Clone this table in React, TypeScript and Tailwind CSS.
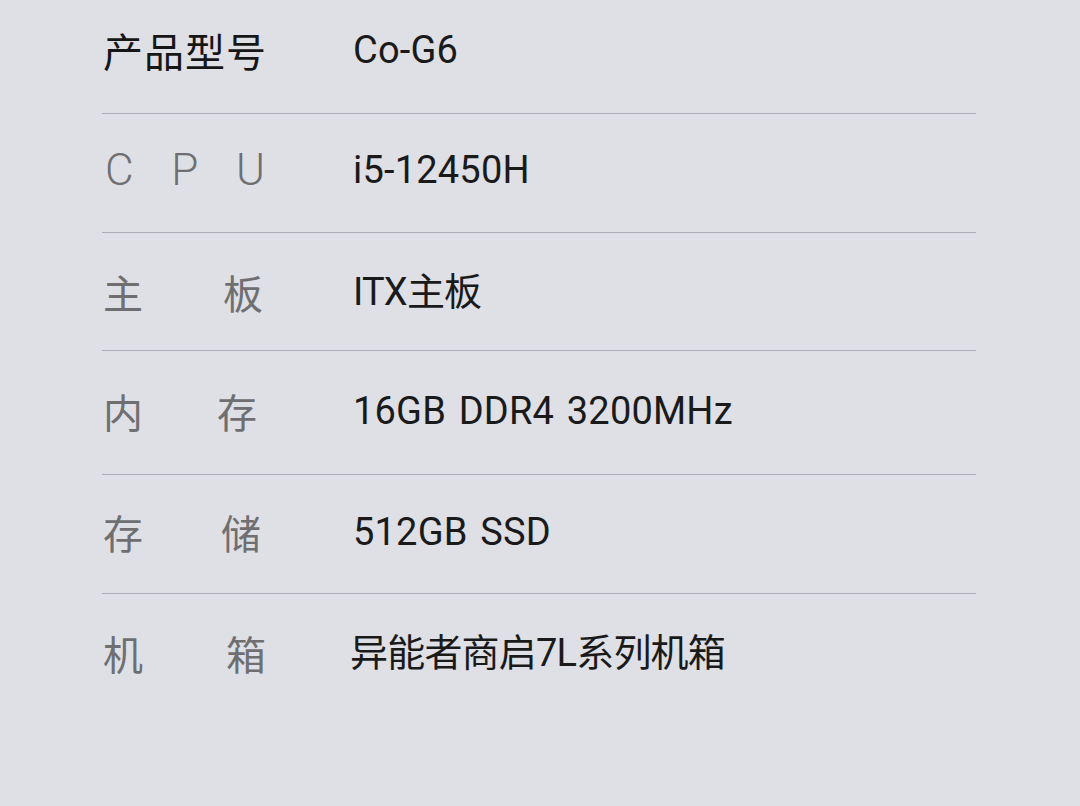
import { type ReactNode } from 'react';

type SpecRow = {
  label: string[];
  value: ReactNode;
  // row height + bottom padding tuned to the divider positions
  box: string;
  labelBox: string;
  valueFix?: string;
  strong?: boolean;
};

const rows: SpecRow[] = [
  { label: ['产', '品', '型', '号'], value: 'Co-G6', box: 'h-[114px] pb-[14px] border-b', labelBox: 'w-[163px]', strong: true },
  { label: ['C', 'P', 'U'], value: 'i5-12450H', box: 'h-[119px] pb-[6px] border-b', labelBox: 'w-[162px]' },
  { label: ['主', '板'], value: 'ITX主板', box: 'h-[118px] border-b', labelBox: 'w-[160px]', valueFix: 'tracking-[-0.8px]' },
  { label: ['内', '存'], value: '16GB DDR4 3200MHz', box: 'h-[124px] pb-[3px] border-b', labelBox: 'w-[154px]' },
  { label: ['存', '储'], value: '512GB SSD', box: 'h-[119px] pb-[4px] border-b', labelBox: 'w-[158px]' },
  { label: ['机', '箱'], value: '异能者商启7L系列机箱', box: 'h-[118px]', labelBox: 'w-[163px]', valueFix: 'tracking-[-0.8px] -ml-[3px]' },
];

function Label({ row }: { row: SpecRow }) {
  const latin = /^[A-Z]$/.test(row.label[0]);
  return (
    <div
      className={`flex justify-between ${row.labelBox} ${
        latin
          ? "pl-[2px] font-['Roboto',sans-serif] text-[44px] font-light"
          : "font-['Noto_Sans_CJK_SC',sans-serif] text-[40px]"
      } leading-none ${row.strong ? 'text-[#161616]' : 'text-[#6f6f72]'}`}
    >
      {row.label.map((ch, i) => (
        <span key={i}>{ch}</span>
      ))}
    </div>
  );
}

export default function App() {
  return (
    <div className="h-[806px] w-[1080px] overflow-hidden bg-[#dee0e5]">
      <div className="ml-[102px] w-[874px]">
        {rows.map((row, i) => (
          <div key={i} className={`flex items-center border-[#abaeb4] ${row.box}`}>
            <div className="w-[251px] shrink-0 pl-[1px]">
              <Label row={row} />
            </div>
            <div
              className={`font-['Roboto','Noto_Sans_CJK_SC',sans-serif] text-[38px] leading-none text-[#1a1a1a] [word-spacing:3px] ${
                row.valueFix ?? 'tracking-[0.2px]'
              }`}
            >
              {row.value}
            </div>
          </div>
        ))}
      </div>
    </div>
  );
}
